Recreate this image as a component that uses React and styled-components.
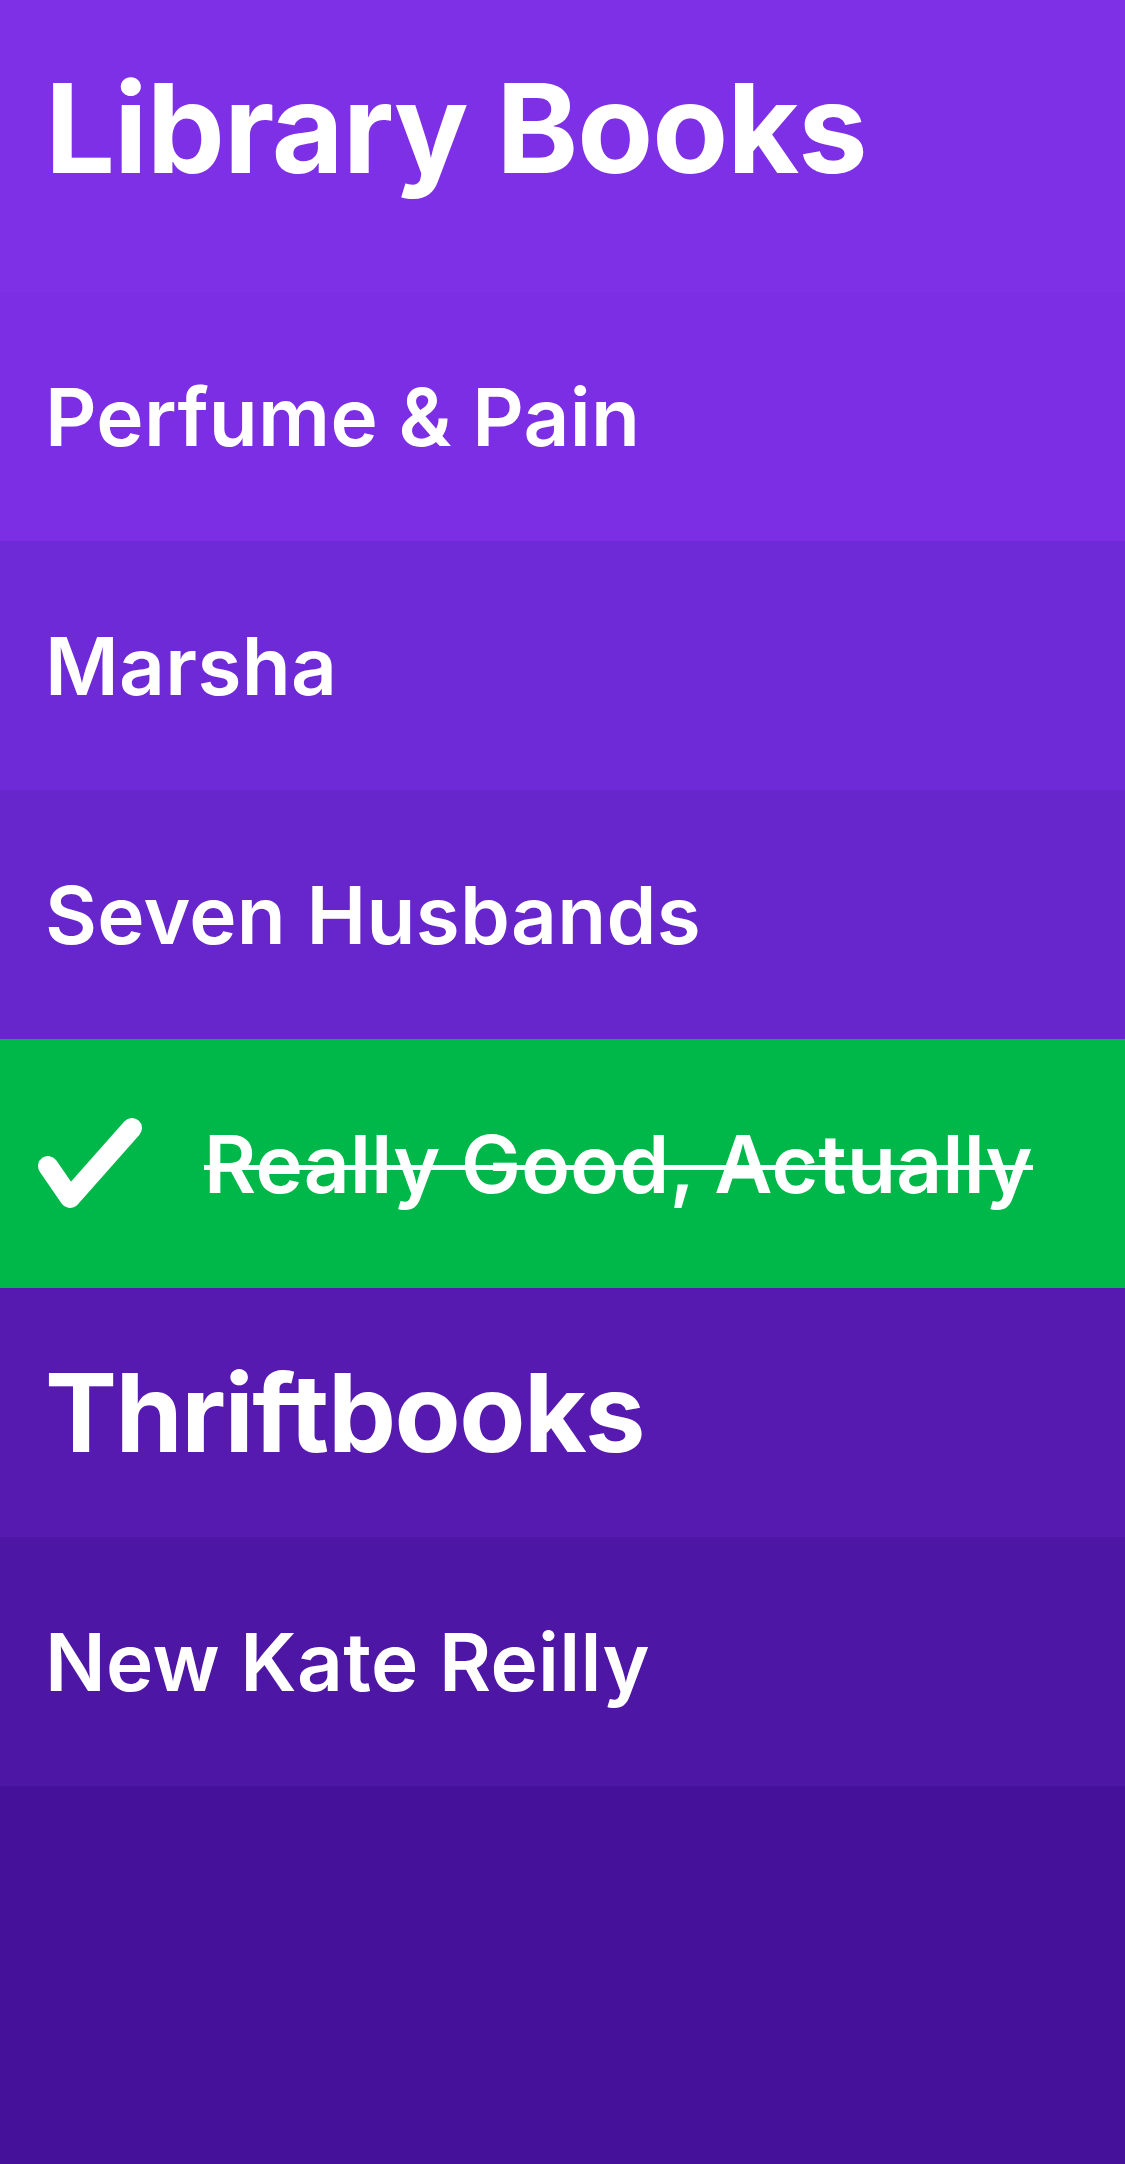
import React from 'react';
import styled, { createGlobalStyle } from 'styled-components';

const GlobalStyle = createGlobalStyle`
  html, body {
    margin: 0;
    padding: 0;
    background-color: #46119a;
  }
  body {
    font-family: Inter, "Noto Sans", "Liberation Sans", sans-serif;
    -webkit-font-smoothing: antialiased;
  }
`;

const Screen = styled.div`
  width: 1125px;
  min-height: 2164px;
  display: flex;
  flex-direction: column;
  background-color: #46119a;
`;

const Header = styled.header`
  height: 292px;
  box-sizing: border-box;
  padding: 60px 0 0 45px;
  background-color: #7e30e6;
`;

const Title = styled.h1`
  margin: 0;
  color: white;
  font-size: 124px;
  font-weight: 700;
  letter-spacing: -1px;
  line-height: 1.1;
`;

const Row = styled.div`
  height: 249px;
  box-sizing: border-box;
  display: flex;
  align-items: center;
  padding-left: ${props => props.done ? '36px' : '45px'};
  background-color: ${props => props.bg};
  color: white;
`;

const ItemText = styled.span`
  font-size: 80px;
  font-weight: 600;
  letter-spacing: 0.3px;
  text-decoration: ${props => props.done ? 'line-through' : 'none'};
  text-decoration-thickness: 5px;
`;

const SectionTitle = styled.h2`
  margin: 0;
  font-size: 108px;
  font-weight: 700;
  letter-spacing: -1.5px;
`;

const CheckWrap = styled.span`
  width: 112px;
  height: 100px;
  margin-right: 56px;
  display: flex;
  align-items: center;
`;

const Check = () => (
  <CheckWrap>
    <svg width="112" height="100" viewBox="0 0 112 100">
      <polyline
        points="12,52 34,84 96,14"
        fill="none"
        stroke="white"
        strokeWidth="20"
        strokeLinecap="round"
        strokeLinejoin="round"
      />
    </svg>
  </CheckWrap>
);

const items = [
  { type: 'item', text: 'Perfume & Pain', bg: '#7b2ee3' },
  { type: 'item', text: 'Marsha', bg: '#6f2ad8' },
  { type: 'item', text: 'Seven Husbands', bg: '#6725cc' },
  { type: 'done', text: 'Really Good, Actually', bg: '#00b84a' },
  { type: 'section', text: 'Thriftbooks', bg: '#561ab0' },
  { type: 'item', text: 'New Kate Reilly', bg: '#4e16a4' },
];

const App = () => {
  return (
    <>
      <GlobalStyle />
      <Screen>
        <Header>
          <Title>Library Books</Title>
        </Header>
        {items.map(item => (
          <Row key={item.text} bg={item.bg} done={item.type === 'done'}>
            {item.type === 'section' && <SectionTitle>{item.text}</SectionTitle>}
            {item.type === 'item' && <ItemText>{item.text}</ItemText>}
            {item.type === 'done' && (
              <>
                <Check />
                <ItemText done>{item.text}</ItemText>
              </>
            )}
          </Row>
        ))}
      </Screen>
    </>
  );
};

export default App;
